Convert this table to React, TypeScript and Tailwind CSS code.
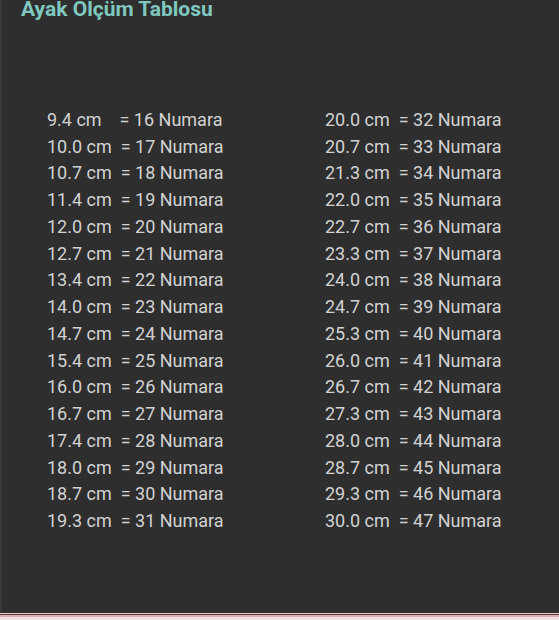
const left = [
  ['9.4 cm    ', 16],
  ['10.0 cm  ', 17],
  ['10.7 cm  ', 18],
  ['11.4 cm  ', 19],
  ['12.0 cm  ', 20],
  ['12.7 cm  ', 21],
  ['13.4 cm  ', 22],
  ['14.0 cm  ', 23],
  ['14.7 cm  ', 24],
  ['15.4 cm  ', 25],
  ['16.0 cm  ', 26],
  ['16.7 cm  ', 27],
  ['17.4 cm  ', 28],
  ['18.0 cm  ', 29],
  ['18.7 cm  ', 30],
  ['19.3 cm  ', 31],
] as const

const right = [
  ['20.0 cm  ', 32],
  ['20.7 cm  ', 33],
  ['21.3 cm  ', 34],
  ['22.0 cm  ', 35],
  ['22.7 cm  ', 36],
  ['23.3 cm  ', 37],
  ['24.0 cm  ', 38],
  ['24.7 cm  ', 39],
  ['25.3 cm  ', 40],
  ['26.0 cm  ', 41],
  ['26.7 cm  ', 42],
  ['27.3 cm  ', 43],
  ['28.0 cm  ', 44],
  ['28.7 cm  ', 45],
  ['29.3 cm  ', 46],
  ['30.0 cm  ', 47],
] as const

function Column({ rows }: { rows: readonly (readonly [string, number])[] }) {
  return (
    <div className="flex flex-col">
      {rows.map(([cm, no]) => (
        <div key={no} className="whitespace-pre leading-[26.73px]">
          {cm}= {no} Numara
        </div>
      ))}
    </div>
  )
}

export default function App() {
  return (
    <div className="w-[559px] h-[620px] flex flex-col bg-[#2e2e2e] font-['Roboto',sans-serif] overflow-hidden">
      <div className="flex-1 flex flex-col border-l-2 border-[#3a3a3a]">
        <h1 className="pl-[19px] text-[21px] leading-[18px] font-bold text-[#7fc8bf]">
          Ayak Olçüm Tablosu
        </h1>

        {/* two-column size table */}
        <div className="grid grid-cols-[278px_1fr] pt-[89px] pl-[45px] text-[18px] text-[#d2d2d2]">
          <Column rows={left} />
          <Column rows={right} />
        </div>
      </div>

      {/* bottom rule */}
      <div className="flex flex-col">
        <div className="h-px bg-[#e6c9c9]" />
        <div className="h-px bg-[#5a3a3a]" />
        <div className="h-[2px] bg-[#d9b3b3]" />
        <div className="h-[3px] bg-[#f1e3e3]" />
      </div>
    </div>
  )
}
